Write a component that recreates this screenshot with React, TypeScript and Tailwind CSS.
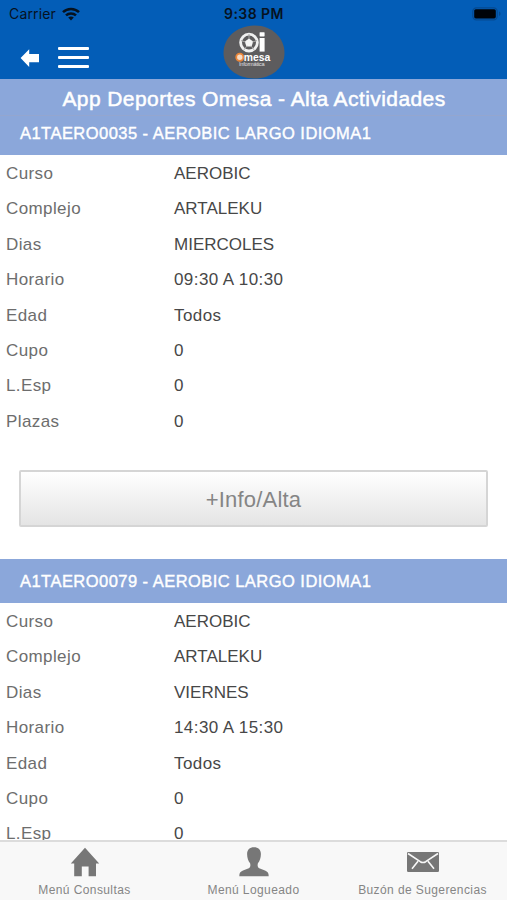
import { clsx } from 'clsx';

type Activity = {
  title: string;
  fields: [string, string][];
};

const activities: Activity[] = [
  {
    title: 'A1TAERO0035 - AEROBIC LARGO IDIOMA1',
    fields: [
      ['Curso', 'AEROBIC'],
      ['Complejo', 'ARTALEKU'],
      ['Dias', 'MIERCOLES'],
      ['Horario', '09:30 A 10:30'],
      ['Edad', 'Todos'],
      ['Cupo', '0'],
      ['L.Esp', '0'],
      ['Plazas', '0'],
    ],
  },
  {
    title: 'A1TAERO0079 - AEROBIC LARGO IDIOMA1',
    fields: [
      ['Curso', 'AEROBIC'],
      ['Complejo', 'ARTALEKU'],
      ['Dias', 'VIERNES'],
      ['Horario', '14:30 A 15:30'],
      ['Edad', 'Todos'],
      ['Cupo', '0'],
      ['L.Esp', '0'],
    ],
  },
];

function WifiIcon() {
  return (
    <svg className="w-[18px] h-[14px]" viewBox="0 0 18 14" fill="none" stroke="#06121f" strokeWidth="2.5">
      <path d="M1 5.2C5.4.9 12.6.9 17 5.2" />
      <path d="M4 8.4c2.8-2.7 7.2-2.7 10 0" />
      <path d="M6.2 10.6c1.6-1.5 4-1.5 5.6 0L9 13.4z" fill="#06121f" stroke="none" />
    </svg>
  );
}

function BatteryIcon() {
  return (
    <svg className="w-[30px] h-[14px]" viewBox="0 0 30 14">
      <rect x="0.8" y="0.8" width="24.4" height="12" rx="3.6" fill="none" stroke="#064a91" strokeWidth="1.2" />
      <rect x="2.2" y="2.2" width="21.6" height="9.2" rx="1.6" fill="#000308" />
      <path d="M27 4.6c2 .6 2 3.8 0 4.4z" fill="#064a91" />
    </svg>
  );
}

function Logo() {
  return (
    <svg className="w-[62px] h-[54px]" viewBox="0 0 62 54" fontFamily="'Liberation Sans', Arial, sans-serif">
      <path d="M31 .5C49 0 61.5 13 61.5 28c0 15-13 25.5-30 25.5C13 53.5.5 42 .5 28 .5 13 13 1 31 .5z" fill="#5d5c5e" />
      <circle cx="26" cy="17.6" r="8.4" fill="none" stroke="#f0f0f0" strokeWidth="2.8" />
      <path d="M26 13.4l4.2 3-1.600 5h-5.200l-1.600-5z" fill="#f5f5f5" />
      <path d="M26 9v5M18 15.600l4.500 1.400M34 15.600l-4.500 1.400M21 24.800l3-4M31 24.800l-3-4" stroke="#a9a9a9" strokeWidth="1" />
      <rect x="36.600" y="7.200" width="5" height="4.200" rx="0.600" fill="#fff" />
      <rect x="36.600" y="13" width="5" height="13.600" fill="#fff" />
      <circle cx="16.800" cy="32.300" r="3.600" fill="#f7dcc5" stroke="#e98539" strokeWidth="1.800" />
      <text x="20.800" y="36.200" fontSize="11.500" fontWeight="700" fill="#fff" textLength="26.500" lengthAdjust="spacingAndGlyphs">mesa</text>
      <text x="16" y="41.400" fontSize="5.600" fill="#e0e0e0" textLength="25.500">Informática</text>
    </svg>
  );
}

function StatusBar() {
  return (
    <div className="grid grid-cols-3 items-center h-[27px] pl-[9px] pr-[5px] text-[#06121f]">
      <div className="flex items-center gap-[6px]">
        <span className="text-[14px] tracking-[0.15px] font-[Inter,sans-serif]">Carrier</span>
        <WifiIcon />
      </div>
      <span className="text-center text-[14px] -ml-[3px] font-semibold tracking-[0.45px] font-[Inter,sans-serif]">9:38 PM</span>
      <div className="flex justify-end">
        <BatteryIcon />
      </div>
    </div>
  );
}

function NavBar() {
  return (
    <div className="grid grid-cols-3 h-[52px]">
      <div className="flex items-start pl-5">
        <svg className="w-5 h-5 mt-[21px]" viewBox="0 0 20 20" fill="#fff">
          <path d="M.6 10L9.200 1.200v4.900H19v8.200H9.200v4.600z" />
        </svg>
        <div className="ml-[18px] mt-[20px] flex w-[31px] flex-col gap-[6px]">
          <span className="h-[3px] rounded-[1px] bg-white" />
          <span className="h-[3px] rounded-[1px] bg-white" />
          <span className="h-[3px] rounded-[1px] bg-white" />
        </div>
      </div>
      <div className="flex justify-center -mt-[2px] pl-px">
        <Logo />
      </div>
    </div>
  );
}

// All-caps words are set tight, everything else gets a little air
const isUpperWord = (value: string) => /^[A-Z]+$/.test(value);

function ActivityCard({ activity, first }: { activity: Activity; first: boolean }) {
  return (
    <section>
      <h2
        className={clsx(
          'bg-[#8ba7da] pl-5 text-[16.5px] text-white whitespace-nowrap tracking-[0.46px] [-webkit-text-stroke:0.4px_white]',
          first ? 'h-[39px] leading-[35px]' : 'h-[44px] leading-[44px]'
        )}
      >
        {activity.title}
      </h2>
      <dl className="pt-[1px]">
        {activity.fields.map(([label, value]) => (
          <div key={label} className="flex h-[35.4px] items-center pl-[6px] text-[17px]">
            <dt className="w-[168px] tracking-[0.4px] text-[#6d6d6d]">{label}</dt>
            <dd className={clsx('text-[#474747]', isUpperWord(value) ? 'tracking-normal' : 'tracking-[0.42px]')}>
              {value}
            </dd>
          </div>
        ))}
      </dl>
      {first && (
        <div className="px-[19px] pt-[31px] pb-8">
          <button className="h-[57px] w-full rounded-[2px] border-2 border-[#d5d5d5] bg-linear-to-b from-white to-[#e4e4e4] pt-[2px] text-[22px] tracking-[0.2px] text-[#858585]">
            +Info/Alta
          </button>
        </div>
      )}
    </section>
  );
}

function HomeIcon() {
  return (
    <svg className="w-[30px] h-[30px]" viewBox="0 0 30 30" fill="#777">
      <path d="M15 .7L29.200 16.500h-3.200v12.800h-7.400v-9.800h-6.800v9.800H4.200V16.500H.8z" />
    </svg>
  );
}

function UserIcon() {
  return (
    <svg className="w-[30px] h-[30px]" viewBox="0 0 30 30" fill="#777">
      <path d="M15 .3c4.300 0 6.900 2.500 6.900 6.700 0 4-1.200 7-3 9.200-.6 2.500-.2 4.300 1.300 5l5.800 2.400c2.700 1.100 3.700 2.500 3.700 5.700H.3c0-3.200 1-4.600 3.700-5.700l5.800-2.400c1.500-.7 1.900-2.500 1.300-5-1.800-2.200-3-5.200-3-9.200C8.100 2.800 10.700.3 15 .3z" />
    </svg>
  );
}

function MailIcon() {
  return (
    <svg className="w-8 h-[30px]" viewBox="0 0 32 30">
      <rect x="0" y="5" width="32" height="20" rx="1.200" fill="#777" />
      <path d="M1 6.500l12.300 8.200q2.700 1.700 5.400 0L31 6.500M5 21.700l6-7.500M27 21.700l-6-7.500" fill="none" stroke="#f8f8f8" strokeWidth="1.600" />
    </svg>
  );
}

const tabs = [
  { label: 'Menú Consultas', icon: <HomeIcon /> },
  { label: 'Menú Logueado', icon: <UserIcon /> },
  { label: 'Buzón de Sugerencias', icon: <MailIcon /> },
];

function TabBar() {
  return (
    <nav className="grid h-[60px] shrink-0 grid-cols-3 border-t-2 border-[#dcdcdc] bg-[#f8f8f8]">
      {tabs.map(tab => (
        <div key={tab.label} className="flex flex-col items-center pt-[5px]">
          {tab.icon}
          <span className="mt-[5px] text-[12px] leading-[16px] tracking-[0.4px] text-[#858585]">{tab.label}</span>
        </div>
      ))}
    </nav>
  );
}

export default function App() {
  return (
    <div className="flex h-screen flex-col overflow-hidden bg-white font-['Liberation_Sans',Arial,sans-serif]">
      <header className="shrink-0 bg-[#035db7]">
        <StatusBar />
        <NavBar />
      </header>
      <h1 className="h-[37px] shrink-0 border-b border-[#94a6cf] bg-[#8ba7da] pt-[4px] pl-px text-center text-[21px] leading-[32px] tracking-[0.42px] text-white [-webkit-text-stroke:0.5px_white]">
        App Deportes Omesa - Alta Actividades
      </h1>
      <main className="min-h-0 flex-1 overflow-hidden">
        {activities.map((activity, idx) => (
          <ActivityCard key={activity.title} activity={activity} first={idx === 0} />
        ))}
      </main>
      <TabBar />
    </div>
  );
}
